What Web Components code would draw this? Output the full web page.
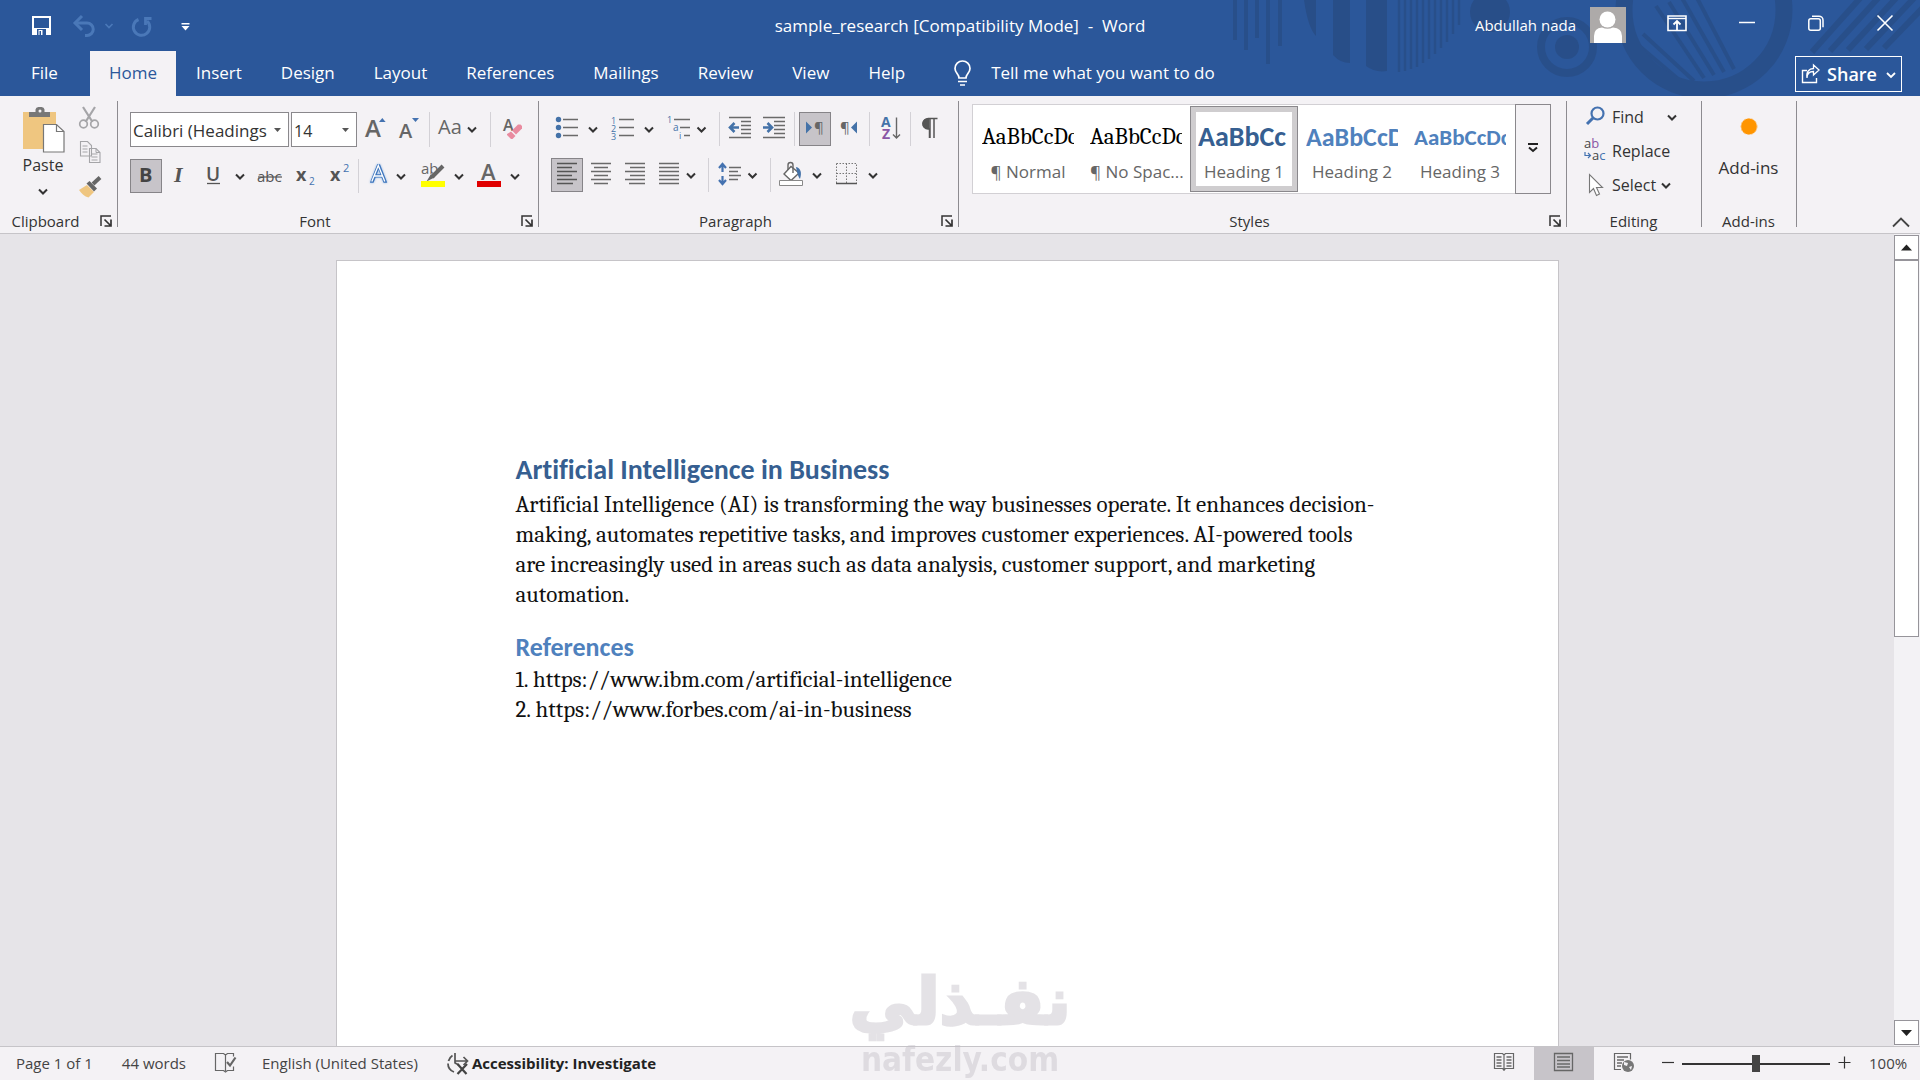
<!DOCTYPE html>
<html lang="en">
<head>
<meta charset="utf-8">
<title>sample_research [Compatibility Mode] - Word</title>
<style>
  html, body { margin: 0; height: 100%; }
  body {
    --blue: #2b579a; --ribbon: #f4f2f5; --canvas: #e6e4e8; --line: #c6c4c8; --ink: #333;
    --serif: Cambria, Caladea, "Liberation Serif", serif;
    --calibri: Calibri, Carlito, Lato, sans-serif;
    font-family: "Open Sans", "Noto Sans", sans-serif; font-size: 16px; color: var(--ink);
    overflow: hidden;
  }
</style>
</head>
<body>
<word-app></word-app>

<script>
/* ---------- artwork: one drawing sheet, each icon is a window on it ---------- */
const G = '#666';
const chev = (x, y, c = '#333') => `<path d="M${x - 4} ${y - 2}l4 4 4-4" fill="none" stroke="${c}" stroke-width="2"/>`;
const rows = (list, c = '#6a6a6a') => `<path d="${list.map(([a, b, y]) => `M${a} ${y}H${b}`).join('')}" stroke="${c}" stroke-width="1.4" fill="none"/>`;
const txt = (x, y, size, s, extra = '') => `<text x="${x}" y="${y}" font-size="${size}" ${extra}>${s}</text>`;
const ART = {
  save: [24, 7, 36, 36, `<path d="M33 16h17v17H33z" fill="none" stroke="#fff" stroke-width="2"/><path d="M32 27h19v7H32z" fill="#fff"/><path d="M37 28h9v6h-9z" fill="#2b579a"/><path d="M38.500 29h4v5h-4z" fill="#fff"/><path d="M39.500 30h1.500v4h-1.500z" fill="#2b579a"/>`],
  undo: [70, 7, 30, 36, `<path d="M77 22h10a6.200 6.200 0 0 1 0 12.500h-2" fill="none" stroke="#4a78b8" stroke-width="3"/><path d="M82 15l-7 7 7 7" fill="none" stroke="#4a78b8" stroke-width="3"/>`],
  undomore: [100, 7, 18, 36, `<path d="M105.500 23l3.500 3.500 3.500-3.500" fill="none" stroke="#4a78b8" stroke-width="1.700"/>`],
  redo: [124, 7, 36, 36, `<path d="M138.500 18.500a8.200 8.200 0 1 0 8.500 1.500" fill="none" stroke="#4a78b8" stroke-width="3"/><path d="M145.500 24v-6.500H151.500" fill="none" stroke="#4a78b8" stroke-width="2.800"/>`],
  customize: [170, 7, 30, 36, `<path d="M181.500 22h8v1.600h-8zM181.500 25h8l-4 4.500z" fill="#fff"/>`],
  bulb: [946, 54, 34, 38, `<path d="M959 77c0-4-4-5-4-9.500a7.500 7.500 0 0 1 15 0c0 4.500-4 5.500-4 9.500z" fill="none" stroke="#fff" stroke-width="1.700"/><path d="M958 80.500h9M960 84h5" stroke="#fff" stroke-width="1.700"/>`],
  ribbonopts: [1657, 5, 40, 36, `<path d="M1668 16h18v14.500h-18z" fill="none" stroke="#fff" stroke-width="1.600"/><path d="M1668 18.500h18" stroke="#fff" stroke-width="1.400"/><path d="M1677 30v-9M1673.500 24.500l3.500-3.500 3.500 3.500" fill="none" stroke="#fff" stroke-width="1.800"/>`],
  min: [1712, 5, 70, 36, `<path d="M1739 22.500h16" stroke="#fff" stroke-width="1.500"/>`],
  restore: [1782, 5, 68, 36, `<rect x="1808.800" y="18.800" width="11.500" height="11.500" rx="2" fill="none" stroke="#fff" stroke-width="1.500"/><path d="M1812 16.200h7a4 4 0 0 1 4 4v7" fill="none" stroke="#fff" stroke-width="1.500"/>`],
  close: [1850, 5, 70, 36, `<path d="M1877.500 15.500l15 15M1892.500 15.500l-15 15" stroke="#fff" stroke-width="1.600"/>`],
  share: [1800, 62, 22, 22, `<path d="M1807 69.500h-4.500v12h14v-4.500" fill="none" stroke="#fff" stroke-width="1.400"/><path d="M1807 77c0-4 2.500-6.500 6.500-6.500v3.500l5.500-5-5.500-5v3.500c-4.500 0-7.500 3.500-6.500 9.500z" fill="none" stroke="#fff" stroke-width="1.300"/>`],
  sharechev: [1882, 62, 16, 22, `<path d="M1887 72l4 4 4-4" fill="none" stroke="#fff" stroke-width="1.800"/>`],
  paste: [20, 104, 52, 50, `<path d="M26 112h33v37H26z" fill="#efc680"/><path d="M32 112h6.500v-2.500a3 3 0 0 1 3-2.500h3a3 3 0 0 1 3 2.500v2.500H53v5H32z" fill="#777"/><circle cx="43" cy="111" r="1.500" fill="#f4f2f5"/><path d="M46.500 124.500h13l7.500 7v20.500H46.500z" fill="#fff" stroke="#777" stroke-width="1.200"/><path d="M59.500 124.500v7h7.500" fill="none" stroke="#777" stroke-width="1.200"/>`],
  cut: [74, 101, 32, 34, `<path d="M83 107l9.500 15M95 107l-9.500 15" stroke="#a5a5a8" stroke-width="2.200"/><circle cx="83.500" cy="124" r="3.800" fill="none" stroke="#a5a5a8" stroke-width="1.700"/><circle cx="94.500" cy="124" r="3.800" fill="none" stroke="#a5a5a8" stroke-width="1.700"/>`],
  copy: [74, 135, 32, 34, `<path d="M80.500 141.500h7l4 4v10.500h-11z M89.500 148.500h6.500l4 4v10h-10.500z" fill="#f4f2f5" stroke="#a5a5a8" stroke-width="1.100"/><path d="M82.500 146h5M82.500 149h5M82.500 152h5M91.500 154h6M91.500 157h6M91.500 160h6M96 148.500v4h4" fill="none" stroke="#a5a5a8"/>`],
  painter: [74, 169, 32, 34, `<path d="M79 190l8-5 7 7-5.500 5.500c-4-1-7-4-9.500-7.500z" fill="#efc680"/><path d="M86.500 183.500l3-2.500 7.500 7.500-3 3z" fill="#666"/><path d="M93 184l7-6.500" stroke="#666" stroke-width="4"/>`],
  launch: [97, 212, 18, 18, `<path d="M101 226v-10h10" fill="none" stroke="#333" stroke-width="1.500"/><path d="M104.500 219.500l6 6M111 219.500v6.500h-6.500" fill="none" stroke="#333" stroke-width="1.700"/>`],
  grow: [357, 112, 35, 35, txt(365, 137, 24, 'A', `fill="${G}" font-weight="600"`) + `<path d="M379 122l3.300-4 3.300 4z" fill="#4472b0"/>`],
  shrink: [392, 112, 34, 35, txt(399, 138, 20, 'A', `fill="${G}" font-weight="600"`) + `<path d="M412 118h7l-3.500 4z" fill="#4472b0"/>`],
  case: [433, 112, 54, 35, txt(438, 134, 20, 'Aa', `fill="${G}"`) + chev(472, 129.500)],
  clear: [494, 112, 38, 35, txt(503, 131, 16, 'A', `fill="${G}" font-weight="600"`) + `<path d="M512 130.500l6-6h2.500l1.500 1.500v2.500l-6 6z" fill="#e98ba0"/><path d="M511 131.500l4.500 4.500-3 3h-1.500l-4-4v-1z" fill="#e98ba0"/>`],
  bold: [130, 159, 32, 34, txt(139, 182, 20, 'B', 'fill="#444" font-weight="700"')],
  italic: [162, 159, 34, 34, txt(174, 182, 22, 'I', 'fill="#555" font-weight="700" font-style="italic" font-family="Liberation Serif, serif"')],
  under: [196, 159, 33, 34, txt(206, 181, 19, 'U', 'fill="#555" font-weight="600"') + '<path d="M207 183.500h13" stroke="#555" stroke-width="1.300"/>'],
  strike: [251, 159, 39, 34, txt(257, 182, 15, 'abc', 'fill="#555"') + '<path d="M258 177h24" stroke="#555" stroke-width="1.200"/>'],
  sub: [290, 159, 33, 34, txt(296, 181, 18, 'x', 'fill="#555" font-weight="700"') + txt(309, 185, 10, '2', 'fill="#4472b0"')],
  sup: [323, 159, 32, 34, txt(330, 181, 18, 'x', 'fill="#555" font-weight="700"') + txt(343, 172, 11, '2', 'fill="#4472b0"')],
  effects: [362, 159, 29, 34, `<g style="filter:drop-shadow(0 0 1px #8fb6e4)">` + txt(371, 182, 24, 'A', 'fill="#3f76bd" stroke="#3f76bd" stroke-width="1.500"') + '</g>' + '<path d="M371.800 181.500l6.500-16 6.500 16M374.300 176h8" fill="none" stroke="#fff" stroke-width="1.300"/>'],
  highlight: [411, 159, 38, 34, txt(421, 174, 15, 'ab', 'fill="#666"') + '<path d="M443 166l-11 11" stroke="#666" stroke-width="4"/><path d="M431 174l3.500 3.500-8 4z" fill="#666"/><path d="M421 181h24v6h-24z" fill="#ff0"/>'],
  color: [469, 159, 36, 34, txt(481, 180, 22, 'A', `fill="${G}" font-weight="600"`) + '<path d="M477 181h24v6h-24z" fill="#e00000"/>'],
  bullets: [551, 113, 32, 34, `<g fill="#4472a8"><circle cx="558.500" cy="120.500" r="2.700"/><circle cx="558.500" cy="128.500" r="2.700"/><circle cx="558.500" cy="136.500" r="2.700"/></g>` + rows([[563, 578, 120.500], [563, 578, 128.500], [563, 578, 136.500]])],
  numbers: [603, 113, 36, 34, ['1', '2', '3'].map((n, i) => txt(611, 124.500 + i * 8, 9, n, 'fill="#4472a8"')).join('') + rows([[619, 634, 120.500], [619, 634, 128.500], [619, 634, 136.500]])],
  multi: [659, 113, 32, 34, txt(667, 124, 9, '1', 'fill="#4472a8"') + txt(673, 132, 10, 'a', 'fill="#4472a8"') + txt(679, 140, 9, 'i', 'fill="#4472a8"') + rows([[674, 690, 120.500], [680, 690, 128.500], [684, 690, 136.500]])],
  outdent: [726, 113, 31, 34, rows([[729, 751, 118.500], [741, 751, 122.500], [741, 751, 126.500], [741, 751, 130.500], [741, 751, 134.500], [729, 751, 138.500]]) + '<path d="M739 128.500h-8M734.500 124l-4.500 4.500 4.500 4.500" fill="none" stroke="#4472a8" stroke-width="2.600"/>'],
  indent: [757, 113, 33, 34, rows([[763, 785, 118.500], [774, 785, 122.500], [774, 785, 126.500], [774, 785, 130.500], [774, 785, 134.500], [763, 785, 138.500]]) + '<path d="M763 128.500h8M767.500 124l4.500 4.500-4.500 4.500" fill="none" stroke="#4472a8" stroke-width="2.600"/>'],
  ltr: [799, 113, 32, 34, '<path d="M806 122.500v12l6-6z" fill="#4472a8"/>' + txt(814, 134, 15, '¶', 'fill="#666"')],
  rtl: [831, 113, 35, 34, '<path d="M857 122.500v12l-6-6z" fill="#4472a8"/>' + txt(840, 134, 15, '¶', 'fill="#666"')],
  sort: [873, 113, 34, 34, txt(881, 128, 14, 'A', 'fill="#4472a8" font-weight="700"') + txt(882, 140, 14, 'Z', 'fill="#8a56a5" font-weight="700"') + '<path d="M896.500 118.500v20M893 135.500l3.500 3.500 3.500-3.500" fill="none" stroke="#666" stroke-width="1.400"/>'],
  pilcrow: [914, 113, 32, 34, '<path d="M937.500 119.500h-9a5 5 0 0 0-0.500 10.500h1.500v9M930 119.500v19.500M934 119.500v19.500" fill="none" stroke="#555" stroke-width="1.500"/><path d="M929.500 119.500h-2a5.200 5.200 0 0 0 0 10.500h2z" fill="#555"/>'],
  left: [551, 159, 32, 34, rows([[557, 577, 164.500], [557, 572, 168.500], [557, 577, 172.500], [557, 572, 176.500], [557, 577, 180.500], [557, 573, 184.500]], '#555')],
  center: [583, 159, 35, 34, rows([[591, 611, 164.500], [594, 608, 168.500], [591, 611, 172.500], [594, 608, 176.500], [591, 611, 180.500], [594, 608, 184.500]])],
  right: [618, 159, 34, 34, rows([[625, 645, 164.500], [630, 645, 168.500], [625, 645, 172.500], [630, 645, 176.500], [625, 645, 180.500], [629, 645, 184.500]])],
  justify: [652, 159, 29, 34, rows([164.500, 168.500, 172.500, 176.500, 180.500, 184.500].map(y => [659, 679, y]))],
  spacing: [715, 159, 27, 34, rows([[729, 741, 168.500], [729, 738, 172.500], [729, 741, 176.500], [729, 738, 180.500]]) + '<path d="M722.500 165v8M722.500 177v8M719 169l3.500-4 3.500 4M719 181l3.500 4 3.500-4" fill="none" stroke="#4472b0" stroke-width="2.200"/>'],
  shading: [777, 159, 30, 34, '<path d="M784 175l7-7.500 8 6.500-8 7.500z" fill="#fff" stroke="#666" stroke-width="1.400"/><path d="M788 171v-5a2.500 2.500 0 0 1 5 0v8" fill="none" stroke="#666" stroke-width="1.400"/><path d="M796 168c5 1 6 6 4 12-2-2-2-5-3-7z" fill="#4472a8"/><path d="M779.500 181.500h23v5h-23z" fill="#fff" stroke="#888"/>'],
  borders: [827, 159, 36, 34, '<path d="M836.500 164.500h20v20M836.500 164.500v20M846.500 164.500v20M836.500 174.500h20" fill="none" stroke="#777" stroke-dasharray="1.500 1.500"/><path d="M836 184.500h21" stroke="#555" stroke-width="1.500"/>'],
  more: [1515, 104, 36, 90, '<path d="M1528 144h10" stroke="#222" stroke-width="2"/><path d="M1529 147.500l4 3.500 4-3.500" fill="none" stroke="#222" stroke-width="2"/>'],
  find: [1582, 104, 26, 26, '<circle cx="1597.500" cy="113.500" r="6" fill="none" stroke="#4472b0" stroke-width="2.200"/><path d="M1593 118l-6 6" stroke="#4472b0" stroke-width="3"/>'],
  replace: [1582, 138, 26, 26, txt(1584, 148, 13, 'a<tspan fill="#8a56a5">b</tspan>', 'fill="#444"') + txt(1592, 160, 13, 'a<tspan fill="#4472b0">c</tspan>', 'fill="#444"') + '<path d="M1585 152v3.500h5M1588 153l2.500 2.500-2.500 2.500" fill="none" stroke="#4472b0" stroke-width="1.200"/>'],
  select: [1582, 171, 26, 26, '<path d="M1589.500 173.500v18l4-4 3 7 3-1.500-3-6.500h6z" fill="#fff" stroke="#777" stroke-width="1.100"/>'],
  addins: [1731, 110, 32, 32, '<circle cx="1747" cy="126.500" r="8" fill="#ff9500"/><circle cx="1747" cy="126.500" r="8" fill="none" stroke="#ffb95c" stroke-dasharray="2 2"/>'],
  collapse: [1884, 212, 32, 20, '<path d="M1893 228.500l8-8 8 8" fill="none" stroke="#444" stroke-width="1.800"/>'],
  proof: [212, 1050, 28, 28, '<path d="M225.500 1056l-2-1.500h-8v17h8l2 1.500 2-1.500h6v-4M225.500 1056v16M225.500 1056l2-1.500h6v3" fill="none" stroke="#666" stroke-width="1.200"/><path d="M227 1063l3 3.500 5.500-8" fill="none" stroke="#666" stroke-width="2.200"/>'],
  access: [444, 1050, 28, 28, '<path d="M452.500 1056.500a9 9 0 0 0-4 5.500M448 1064.500a9 9 0 0 0 6 8.500" fill="none" stroke="#555" stroke-width="1.800"/><path d="M455 1054v10.500M455 1062h12M463.500 1058l4 4-4 4M455 1064l4 2" fill="none" stroke="#555" stroke-width="1.700"/><path d="M457.500 1065l9 10M467 1065l-9.500 10" stroke="#444" stroke-width="2.200"/>'],
  read: [1474, 1047, 60, 33, '<path d="M1494.500 1053.500h8l1.500 1.500 1.500-1.500h8v15h-8l-1.500 1.500-1.500-1.500h-8zM1504 1055v16" fill="none" stroke="#666" stroke-width="1.200"/>' + rows([1057, 1060, 1063, 1066].flatMap(y => [[1496.500, 1501.500, y], [1506.500, 1511.500, y]]))],
  print: [1534, 1047, 60, 33, '<path d="M1554.500 1053.500h18v17h-18z" fill="none" stroke="#666" stroke-width="1.300"/>' + rows([1057, 1060.500, 1064, 1067].map(y => [1557, 1570, y]))],
  web: [1594, 1047, 60, 33, '<path d="M1621 1069.500h-6.500v-16h16v6" fill="none" stroke="#666" stroke-width="1.200"/>' + rows([[1617, 1628, 1057], [1617, 1624, 1060], [1617, 1622, 1063], [1617, 1621, 1066]]) + '<circle cx="1628" cy="1066" r="6" fill="#777"/><path d="M1624 1062l4 1-1 3-3-1zM1629 1067l3-1-1 4z" fill="#f4f2f5"/>'],
  minus: [1654, 1047, 26, 33, '<path d="M1662 1062.500h12" stroke="#333" stroke-width="1.200"/>'],
  plus: [1832, 1047, 24, 33, '<path d="M1838.500 1062.500h12M1844.500 1056.500v12" stroke="#333" stroke-width="1.200"/>'],
  up: [0, 0, 23, 23, '<path d="M6 14.500h11l-5.500-6z" fill="#222"/>'],
  down: [0, 0, 23, 23, '<path d="M6 9h11l-5.500 6z" fill="#222"/>'],
  avatar: [0, 0, 36, 36, '<path d="M0 0h36v36H0z" fill="#adaaa9"/><circle cx="17.500" cy="12.500" r="8" fill="#fff"/><path d="M4 36v-7q0-8 8-8.500q5.500 2.500 11 0q9 .5 9 8.500v7z" fill="#fff"/>'],
};
const svg = (name, w = 20) => {
  if (name === 'chev') return `<svg width="${w}" height="34" viewBox="0 0 ${w} 34" aria-hidden="true">${chev(w / 2, 17.5)}</svg>`;
  const [x, y, aw, ah, body] = ART[name];
  return `<svg width="${aw}" height="${ah}" viewBox="${x} ${y} ${aw} ${ah}" aria-hidden="true">${body}</svg>`;
};

class Base extends HTMLElement {
  connectedCallback() {
    if (this.shadowRoot) return;
    this.attachShadow({ mode: 'open' }).innerHTML =
      `<style>*{box-sizing:border-box}svg{display:block;flex:none;font-family:"Open Sans","Noto Sans",sans-serif}button,input,select{font:inherit;color:inherit;margin:0}button{padding:0;border:0;background:none}${this.css()}</style>${this.html()}`;
  }
}

/* <word-tool art label [pressed] [w]> : icon button */
customElements.define('word-tool', class extends Base {
  css() { return `:host{display:block;flex:none}button{display:block}
    :host([pressed]) button{background:#c7c4c9;box-shadow:inset 0 0 0 1px #868488}`; }
  html() { return `<button type="button" aria-label="${this.getAttribute('label')}">${svg(this.getAttribute('art'), +this.getAttribute('w') || 20)}</button>`; }
});

/* thin rule between tools */
customElements.define('word-sep', class extends Base {
  css() { return `:host{display:flex;flex:none;justify-content:center;width:${this.getAttribute('w') || 7}px}i{width:1px;background:#d3d1d6}`; }
  html() { return '<i></i>'; }
});

customElements.define('word-combo', class extends Base {
  css() { return `:host{display:block;flex:none;width:${this.getAttribute('w')}px;height:35px}
    select{appearance:none;width:100%;height:35px;border:1px solid #8a888c;border-radius:0;padding:2px 21px 0 2px;font-size:${this.getAttribute('size')}px;outline:0;
    background:#fff url("data:image/svg+xml,%3Csvg xmlns='http://www.w3.org/2000/svg' width='7' height='4'%3E%3Cpath d='M0 0h7L3.5 4z' fill='%23555'/%3E%3C/svg%3E") no-repeat right 7px top 15px}`; }
  html() { return `<select aria-label="${this.getAttribute('label')}"><option>${this.getAttribute('value')}</option></select>`; }
});

customElements.define('word-group', class extends Base {
  css() { return `:host{display:flex;flex-direction:column;flex:none;height:137px;width:${this.getAttribute('w')}px;
      background:linear-gradient(#8d8b90,#8d8b90) right 5px / 1px 126px no-repeat}
    .body{flex:1;min-height:0}
    footer{display:flex;align-items:center;height:24px;padding-right:2px;font-size:15px;line-height:20px}
    footer span{flex:1;text-align:center}
    :host([launcher]) footer{padding-right:3px}:host([launcher]) span{padding-right:6px}`; }
  html() { return `<div class="body"><slot></slot></div><footer><span>${this.getAttribute('label')}</span>${this.hasAttribute('launcher') ? `<button type="button" aria-label="${this.getAttribute('label')} settings">${svg('launch')}</button>` : ''}</footer>`; }
});

customElements.define('word-style', class extends Base {
  css() { return `:host{display:block;width:108px;height:86px}
    button{display:flex;flex-direction:column;width:100%;height:100%;border:1px solid transparent;padding:0 7px;overflow:hidden;text-align:left}
    :host([selected]) button{border-color:#8a888c;box-shadow:inset 0 0 0 5px #cfcdcf}
    .s{width:92px;height:48px;padding-top:14px;line-height:32px;overflow:hidden;white-space:nowrap}
    .n{width:92px;line-height:24px;padding-top:5px;text-align:center;font-size:17px;color:#666;white-space:nowrap}`; }
  html() { return `<button type="button"><span class="s" style="${this.getAttribute('look')}">${this.getAttribute('sample')}</span><span class="n"><slot></slot></span></button>`; }
});

customElements.define('word-title', class extends Base {
  css() { return `:host{display:grid;grid-template-columns:1fr auto 1fr;align-items:center;height:51px;color:#fff;position:relative}
    .l,.r{display:flex;align-items:center}.l{padding-left:24px}.r{justify-content:flex-end}
    .t{white-space:pre;font-size:17px;line-height:24px}.u{font-size:15px;margin-right:14px}.a{margin-right:31px}.r word-tool{margin-bottom:5px}
    .u,.a{padding-bottom:1px}
    .gap{width:10px}.gap.s{width:6px}.gap.m{width:15px}`; }
  html() { return `<div class="l">
      <word-tool art="save" label="Save"></word-tool><div class="gap"></div>
      <word-tool art="undo" label="Undo"></word-tool><word-tool art="undomore" label="Undo history"></word-tool><div class="gap s"></div>
      <word-tool art="redo" label="Repeat"></word-tool><div class="gap"></div>
      <word-tool art="customize" label="Customize Quick Access Toolbar"></word-tool></div>
    <div class="t">sample_research [Compatibility Mode]  -  Word</div>
    <div class="r"><span class="u">Abdullah nada</span><span class="a">${svg('avatar')}</span>
      <word-tool art="ribbonopts" label="Ribbon Display Options"></word-tool><div class="gap m"></div>
      <word-tool art="min" label="Minimize"></word-tool><word-tool art="restore" label="Restore"></word-tool><word-tool art="close" label="Close"></word-tool></div>`; }
});

customElements.define('word-tabs', class extends Base {
  css() { return `:host{display:flex;align-items:stretch;height:45px;color:#fff;position:relative;font-size:17px}
    nav{display:flex;gap:1px;padding-left:12px}
    nav button{padding:0 19px 2px;line-height:24px}
    nav button.file{margin-right:12px}
    nav button.on{background:var(--ribbon);color:var(--blue)}
    label{display:flex;align-items:center;margin-left:22px;gap:11px}
    input{width:280px;border:0;background:none;outline:0;padding:0 0 2px}input::placeholder{color:#fff;opacity:1}
    .share{display:flex;align-items:center;align-self:center;height:36px;margin:0 18px 0 auto;border:1px solid #fff;padding:0 3px 0 4px;font-size:18px;font-weight:600;gap:5px}`; }
  html() { return `<nav>${['File', 'Home', 'Insert', 'Design', 'Layout', 'References', 'Mailings', 'Review', 'View', 'Help'].map(t =>
      `<button type="button"${t === 'Home' ? ' class="on"' : t === 'File' ? ' class="file"' : ''}>${t}</button>`).join('')}</nav>
    <label>${svg('bulb')}<input type="text" aria-label="Tell me what you want to do" placeholder="Tell me what you want to do"></label>
    <button type="button" class="share">${svg('share')}<span>Share</span>${svg('sharechev')}</button>`; }
});

const T = (art, label, x = '') => `<word-tool art="${art}" label="${label}" ${x}></word-tool>`;
const C = (label, w) => `<word-tool art="chev" w="${w}" label="${label}"></word-tool>`;
const S = (w = 7) => `<word-sep w="${w}"></word-sep>`;
const SERIF = 'font-family:var(--serif);font-size:23px;color:#000';

customElements.define('word-ribbon', class extends Base {
  css() { return `:host{display:flex;background:var(--ribbon);border-bottom:1px solid var(--line);height:138px}
    .row{display:flex}.tools{display:flex;flex-direction:column;gap:12px;padding:16px 0 0 12px}
    .combos{display:flex;gap:2px}
    .clip{display:flex;padding-top:5px}.paste{display:flex;flex-direction:column;align-items:center;width:54px;margin:3px 0 0 16px;line-height:22px}
    .paste svg:last-child{margin-top:-2px}.small{margin-left:4px}
    .gallery{display:flex;margin:8px 0 0 13px;height:90px}
    .cards{display:flex;padding:1px 1px;background:#fff;border:1px solid #d2d0d4;border-right:0}
    .more{border:1px solid #8a888c;background:var(--ribbon);width:36px}.more svg{margin:-1px}
    .edit{display:flex;flex-direction:column;padding:4px 0 0 15px}
    .edit button{display:flex;align-items:center;gap:4px;height:34px;line-height:22px;text-align:left}
    .find span{margin-right:14px}
    .add{display:flex;flex-direction:column;align-items:center;width:100%;padding:14px 2px 0 0;font-size:17px;line-height:24px;gap:14px}
    .end{margin-left:auto;align-self:flex-end;padding:0 4px 3px 0}`; }
  html() { return `
    <word-group label="Clipboard" launcher w="118"><div class="clip">
      <button type="button" class="paste">${svg('paste')}<span>Paste</span>${svg('chev')}</button>
      <div class="small">${T('cut', 'Cut')}${T('copy', 'Copy')}${T('painter', 'Format Painter')}</div></div></word-group>
    <word-group label="Font" launcher w="421"><div class="tools">
      <div class="row"><div class="combos"><word-combo w="159" size="17" label="Font" value="Calibri (Headings)"></word-combo><word-combo w="66" size="16" label="Font size" value="14"></word-combo></div>
        ${T('grow', 'Increase Font Size')}${T('shrink', 'Decrease Font Size')}${S()}${T('case', 'Change Case')}${S()}${T('clear', 'Clear Formatting')}</div>
      <div class="row">${T('bold', 'Bold', 'pressed')}${T('italic', 'Italic')}${T('under', 'Underline')}${C('Underline styles', 22)}${T('strike', 'Strikethrough')}${T('sub', 'Subscript')}${T('sup', 'Superscript')}${S()}${T('effects', 'Text Effects')}${C('Effects menu', 20)}${T('highlight', 'Highlight')}${C('Highlight colors', 20)}${T('color', 'Font Color')}${C('Font colors', 20)}</div></div></word-group>
    <word-group label="Paragraph" launcher w="420"><div class="tools">
      <div class="row">${T('bullets', 'Bullets')}${C('Bullet library', 20)}${T('numbers', 'Numbering')}${C('Numbering library', 20)}${T('multi', 'Multilevel List')}${C('List library', 21)}${S(14)}${T('outdent', 'Decrease Indent')}${T('indent', 'Increase Indent')}${S(9)}${T('ltr', 'Left-to-Right', 'pressed')}${T('rtl', 'Right-to-Left')}${S()}${T('sort', 'Sort')}${S()}${T('pilcrow', 'Show marks')}</div>
      <div class="row">${T('left', 'Align Left', 'pressed')}${T('center', 'Center')}${T('right', 'Align Right')}${T('justify', 'Justify')}${C('Justify options', 20)}${S(14)}${T('spacing', 'Line Spacing')}${C('Spacing options', 21)}${S(14)}${T('shading', 'Shading')}${C('Shading colors', 20)}${T('borders', 'Borders')}${C('Border options', 20)}</div></div></word-group>
    <word-group label="Styles" launcher w="608"><div class="gallery"><div class="cards">
      <word-style sample="AaBbCcDc" look="${SERIF}">¶ Normal</word-style>
      <word-style sample="AaBbCcDc" look="${SERIF}">¶ No Spac...</word-style>
      <word-style selected sample="AaBbCc" look="font:700 28px/32px var(--calibri);color:#365f91">Heading 1</word-style>
      <word-style sample="AaBbCcD" look="font:700 26px/32px var(--calibri);color:#4f81bd">Heading 2</word-style>
      <word-style sample="AaBbCcDc" look="font:700 23px/32px var(--calibri);color:#4f81bd">Heading 3</word-style></div>
      <button type="button" class="more" aria-label="More styles">${svg('more')}</button></div></word-group>
    <word-group label="Editing" w="135"><div class="edit">
      <button type="button" class="find">${svg('find')}<span>Find</span>${svg('chev')}</button>
      <button type="button">${svg('replace')}<span>Replace</span></button>
      <button type="button">${svg('select')}<span>Select</span>${svg('chev', 12)}</button></div></word-group>
    <word-group label="Add-ins" w="95"><button type="button" class="add">${svg('addins')}<span>Add-ins</span></button></word-group>
    <div class="end">${T('collapse', 'Collapse the Ribbon')}</div>`; }
});

customElements.define('word-page', class extends Base {
  css() { return `:host{display:block;width:1223px;padding:191px 160px 0 179px;background:#fff;border:1px solid var(--line);border-bottom:0;font-family:var(--serif);font-size:23px;line-height:30px;color:#111}
    h1,h2,p{margin:0;white-space:nowrap}
    h1,h2{font-variant-ligatures:none}
    h1{font:700 28px/36px var(--calibri);color:#365f91;margin-bottom:2px;font-variant-ligatures:none}
    h2{font:700 26px/34px var(--calibri);color:#4f81bd;margin:20px 0 1px}`; }
  html() { return `<h1>Artificial Intelligence in Business</h1>
    <p>Artificial Intelligence (AI) is transforming the way businesses operate. It enhances decision-<br>making, automates repetitive tasks, and improves customer experiences. AI-powered tools<br>are increasingly used in areas such as data analysis, customer support, and marketing<br>automation.</p>
    <h2>References</h2><p>1. https://www.ibm.com/artificial-intelligence<br>2. https://www.forbes.com/ai-in-business</p>`; }
});

customElements.define('word-scroll', class extends Base {
  css() { return `:host{display:flex;flex-direction:column;width:26px;padding:1px 0;background:#f3f2f5}
    button{width:25px;height:25px;border:1px solid #96949a;background:#fff;flex:none}
    .thumb{flex:0 1 377px;border:1px solid #96949a;background:#fff;width:25px}.sp{flex:1}`; }
  html() { return `<button type="button" aria-label="Scroll up">${svg('up')}</button><div class="thumb"></div><div class="sp"></div><button type="button" aria-label="Scroll down">${svg('down')}</button>`; }
});

customElements.define('word-status', class extends Base {
  css() { return `:host{display:flex;align-items:center;height:34px;background:var(--ribbon);border-top:1px solid var(--line);font-size:15px;line-height:22px;color:#444}
    button{display:flex;align-items:center;white-space:nowrap}
    .l{display:flex;align-items:center;padding:0 0 2px 16px}.l .p{margin-right:29px}.l .w{margin-right:26px}.l .e{margin:0 26px 0 22px}.l b{color:#222}
    .r{display:flex;align-items:center;margin-left:auto}.on{background:#c7c4c9}
    .z{width:39px;margin:0 12px 0 13px;padding-bottom:2px}
    input{appearance:none;width:148px;height:18px;background:linear-gradient(#333,#333) center / 100% 2px no-repeat;margin:0 2px}
    input::-webkit-slider-thumb{appearance:none;width:8px;height:17px;background:#444;border:0}`; }
  html() { return `<div class="l"><button type="button" class="p">Page 1 of 1</button><button type="button" class="w">44 words</button>
      <button type="button" aria-label="Proofing">${svg('proof')}</button><button type="button" class="e">English (United States)</button>
      <button type="button">${svg('access')}<b>Accessibility: Investigate</b></button></div>
    <div class="r">${T('read', 'Read Mode')}<word-tool class="on" art="print" label="Print Layout"></word-tool>${T('web', 'Web Layout')}
      ${T('minus', 'Zoom out')}<input type="range" min="0" max="100" value="50" aria-label="Zoom">${T('plus', 'Zoom in')}<button type="button" class="z">100%</button></div>`; }
});

customElements.define('word-app', class extends Base {
  css() { return `:host{display:flex;flex-direction:column;height:100vh;position:relative}
    header{position:relative;background:var(--blue);overflow:hidden}
    header > svg{position:absolute;right:0;top:0}
    main{flex:1;min-height:0;display:flex;background:var(--canvas)}
    .canvas{flex:1;display:flex;justify-content:center;overflow:hidden;padding-top:26px}
    .mark{position:absolute;left:0;right:0;bottom:0;display:flex;flex-direction:column;align-items:center;padding-bottom:2px;pointer-events:none;color:#c4c0c8;opacity:.45;font-weight:700}
    .ar{font:700 65px/80px "DejaVu Sans",sans-serif;-webkit-text-stroke:3px #c4c0c8}.en{font:700 33px/36px "DejaVu Sans Condensed","DejaVu Sans",sans-serif}`; }
  html() {
    const bars = [[1235, 40], [1246, 50], [1257, 38], [1268, 64], [1280, 46]].map(([x, h]) => `<path d="M${x} 0v${h}"/>`).join('');
    const fine = [72, 71, 69, 67, 63, 59, 54, 48, 42, 34, 25].map((h, i) => `<path d="M${1399 + i * 6} 0v${h}"/>`).join('');
    const diag = [0, 1, 2, 3, 4, 5].map(i => `<path d="M${1630 + i * 13} ${14 - i * 4 + (i < 2 ? 24 : 0)}L${1684 + i * 10} ${84 - i * 3}"/>`).join('');
    const right = [0, 1, 2, 3, 4].map(i => `<path d="M${1812 + i * 18} ${52 - i}L${1862 + i * 18} -4"/>`).join('');
    return `<header><svg width="700" height="96" viewBox="1220 0 700 96" aria-hidden="true"><g fill="none" stroke="#284c84" opacity=".7">
      <g stroke-width="4">${bars}</g><g stroke-width="2.500">${fine}</g><g stroke-width="4">${diag}</g><g stroke-width="6">${right}</g>
      <circle cx="1567" cy="47" r="26" stroke-width="8"/><circle cx="1704" cy="10" r="80" stroke-width="17"/></g>
      <g fill="#284c84" opacity=".8"><path d="M1304 0h12v36q-8-8-12-36zM1333 0h17v63q-10 0-17-8zM1366 0h21v71q-12 2-21-5z"/><circle cx="1490" cy="12" r="20"/><circle cx="1567" cy="47" r="12"/></g></svg>
      <word-title></word-title><word-tabs></word-tabs></header>
    <word-ribbon></word-ribbon>
    <main><div class="canvas"><word-page></word-page></div><word-scroll></word-scroll></main>
    <word-status></word-status>
    <div class="mark"><span class="ar" lang="ar" dir="rtl">نفـذلي</span><span class="en">nafezly.com</span></div>`; }
});
</script>
</body>
</html>
